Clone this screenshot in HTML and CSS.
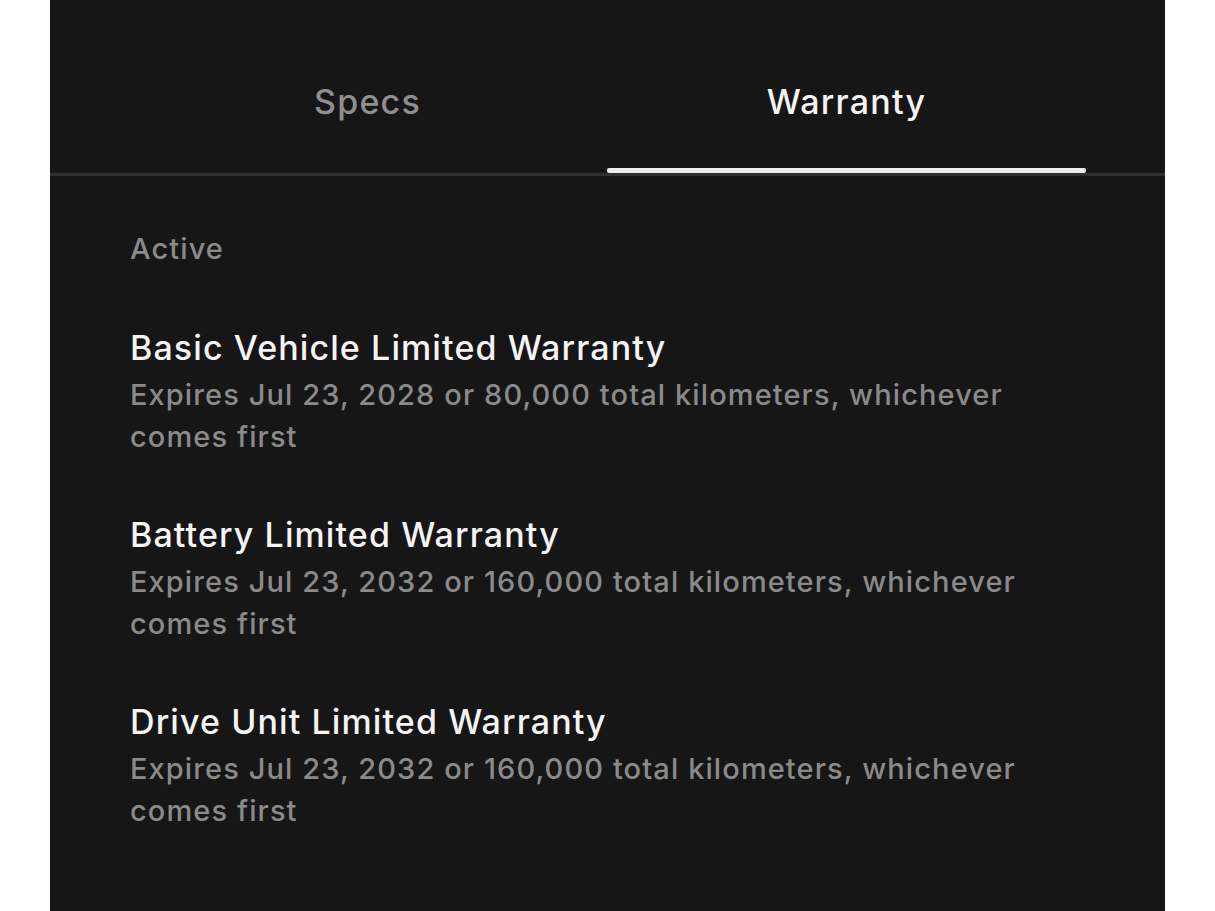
FILE: index.html
```html
<!DOCTYPE html>
<html lang="en">
<head>
    <meta charset="UTF-8">
    <meta name="viewport" content="width=device-width, initial-scale=1.0">
    <title>Warranty</title>
    <link rel="stylesheet" href="styles.css">
</head>
<body>
    <div class="panel">
        <nav class="tabs">
            <div class="tab-row">
                <a class="tab">Specs</a>
                <a class="tab active">Warranty</a>
            </div>
        </nav>

        <section class="warranty">
            <h2 class="section-label">Active</h2>

            <ul class="warranty-list">
                <li class="warranty-item">
                    <h3>Basic Vehicle Limited Warranty</h3>
                    <p>Expires Jul 23, 2028 or 80,000 total kilometers, whichever comes first</p>
                </li>
                <li class="warranty-item">
                    <h3>Battery Limited Warranty</h3>
                    <p>Expires Jul 23, 2032 or 160,000 total kilometers, whichever comes first</p>
                </li>
                <li class="warranty-item">
                    <h3>Drive Unit Limited Warranty</h3>
                    <p>Expires Jul 23, 2032 or 160,000 total kilometers, whichever comes first</p>
                </li>
            </ul>
        </section>
    </div>
</body>
</html>
```

FILE: styles.css
```css
/* General reset */
* {
    margin: 0;
    padding: 0;
    box-sizing: border-box;
}

body {
    font-family: Inter, "Liberation Sans", sans-serif;
    background-color: #ffffff;
    height: 100vh;
    overflow: hidden;
}

.panel {
    margin-left: 50px;
    width: 1115px;
    height: 100%;
    background-color: #161616;
}

/* Tabs */
.tabs {
    border-bottom: 3px solid #303030;
}

.tab-row {
    display: flex;
    padding: 0 79px 0 78px;
}

.tab {
    flex: 1;
    height: 173px;
    padding-top: 29px;
    display: flex;
    align-items: center;
    justify-content: center;
    position: relative;
    font-size: 34px;
    font-weight: 500;
    letter-spacing: 1.2px;
    color: #8f8f8f;
    cursor: pointer;
}

.tab.active {
    color: #f4f4f4;
}

.tab.active::after {
    content: "";
    position: absolute;
    left: 0;
    right: 0;
    bottom: 0;
    height: 5px;
    background-color: #ececec;
    border-radius: 2px;
}

/* Warranty list */
.warranty {
    padding: 55px 79px 0 80px;
}

.section-label {
    font-size: 29px;
    line-height: 36px;
    font-weight: 500;
    letter-spacing: 1.1px;
    color: #8a8a8a;
}

.warranty-list {
    list-style: none;
    margin-top: 61px;
    display: flex;
    flex-direction: column;
    gap: 57px;
}

.warranty-item h3 {
    font-size: 34px;
    line-height: 40px;
    font-weight: 500;
    letter-spacing: 1.1px;
    color: #f4f4f4;
}

.warranty-item p {
    margin-top: 6px;
    font-size: 29px;
    line-height: 42px;
    font-weight: 500;
    letter-spacing: 1.1px;
    color: #8a8a8a;
}
```
